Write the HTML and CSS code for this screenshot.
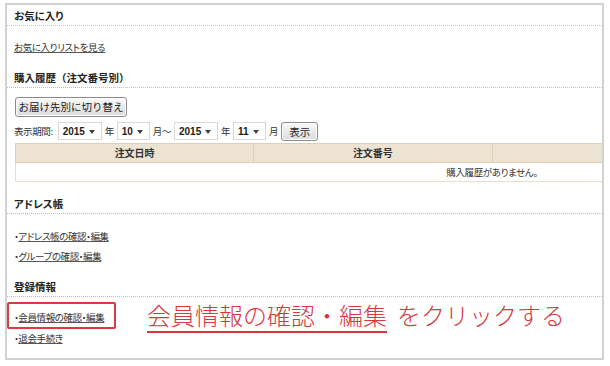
FILE: index.html
```html
<!DOCTYPE html>
<html lang="ja">
<head>
<meta charset="utf-8">
<title>マイページ</title>
<link rel="stylesheet" href="styles.css">
</head>
<body>
<div class="frame">
  <section class="sec sec-fav">
    <h2 class="sec-head">お気に入り</h2>
    <div class="sec-body">
      <a class="link" href="#">お気に入りリストを見る</a>
    </div>
  </section>

  <section class="sec sec-history">
    <h2 class="sec-head sec-head-wide">購入履歴（注文番号別）</h2>
    <div class="sec-body">
      <button class="btn btn-switch" type="button">お届け先別に切り替え</button>
      <div class="period">
        <span class="lbl lbl-period">表示期間:</span>
        <span class="sel sel-year"><select><option>2015</option></select></span>
        <span class="lbl">年</span>
        <span class="sel sel-month"><select><option>10</option></select></span>
        <span class="lbl">月～</span>
        <span class="sel sel-year"><select><option>2015</option></select></span>
        <span class="lbl">年</span>
        <span class="sel sel-month"><select><option>11</option></select></span>
        <span class="lbl">月</span>
        <button class="btn btn-show" type="button">表示</button>
      </div>
      <table class="orders">
        <thead>
          <tr><th>注文日時</th><th>注文番号</th><th></th><th></th></tr>
        </thead>
        <tbody>
          <tr><td colspan="4">購入履歴がありません。</td></tr>
        </tbody>
      </table>
    </div>
  </section>

  <section class="sec sec-address">
    <h2 class="sec-head">アドレス帳</h2>
    <ul class="sec-body links">
      <li>・<a class="link" href="#">アドレス帳の確認・編集</a></li>
      <li>・<a class="link" href="#">グループの確認・編集</a></li>
    </ul>
  </section>

  <section class="sec sec-member">
    <h2 class="sec-head">登録情報</h2>
    <ul class="sec-body links links-member">
      <li class="highlighted">・<a class="link" href="#">会員情報の確認・編集</a>
        <span class="hl-box"></span>
        <span class="callout"><span class="callout-target">会員情報の確認・編集</span><span class="callout-action">をクリックする</span></span>
      </li>
      <li>・<a class="link" href="#">退会手続き</a></li>
    </ul>
  </section>
</div>
</body>
</html>
```

FILE: styles.css
```css
html, body {
  margin: 0;
  padding: 0;
  background: #fff;
}

body {
  font-family: "Noto Sans CJK JP", "Noto Sans", sans-serif;
  font-size: 9.5px;
  letter-spacing: -0.4px;
  color: #333;
  font-feature-settings: "palt";
}

.frame {
  position: relative;
  margin: 3px 0 0 5px;
  width: 599px;
  height: 357px;
  box-sizing: border-box;
  border: 2px solid #d2d2d2;
  overflow: hidden;
}

.sec-head {
  margin: 15px 0 0;
  padding: 0 0 2px 7px;
  font-size: 10.5px;
  letter-spacing: 0;
  font-weight: bold;
  line-height: 14px;
  color: #222;
  border-bottom: 1px dotted #c8cc62;
}

.sec-head-wide {
  font-feature-settings: normal;
}

.sec-fav .sec-head {
  margin-top: 4px;
}

.sec-body {
  margin: 0;
  padding: 0 0 0 7px;
}

.link {
  color: #333;
  text-decoration: underline;
  text-decoration-color: #555;
}

/* favourites */
.sec-fav .sec-body {
  padding-top: 14px;
  line-height: 14px;
  padding-bottom: 2px;
}

/* purchase history */
.sec-history .sec-body {
  padding-top: 9px;
  padding-left: 8px;
}

.btn {
  display: block;
  box-sizing: border-box;
  height: 20px;
  padding: 0;
  margin: 0;
  font-family: inherit;
  font-size: 10.5px;
  letter-spacing: 0;
  line-height: 18px;
  color: #222;
  text-align: center;
  border: 1px solid #8a8a8a;
  border-radius: 3px;
  background: linear-gradient(#fafafa, #e9e9e9 50%, #dcdcdc);
  box-shadow: inset 0 0 0 1px #fff;
}

.btn-switch {
  width: 112px;
}

.period {
  display: flex;
  align-items: center;
  gap: 3px;
  margin-top: 5px;
  height: 18px;
  margin-left: -1px;
}

.lbl {
  font-size: 9.5px;
  line-height: 18px;
}

.lbl-period {
  margin-right: 2px;
}

.sel {
  position: relative;
  display: inline-block;
  height: 18px;
}

.sel::after {
  content: "";
  position: absolute;
  right: 7px;
  top: 8px;
  border-left: 3px solid transparent;
  border-right: 3px solid transparent;
  border-top: 4px solid #444;
  pointer-events: none;
}

.sel select {
  -webkit-appearance: none;
  appearance: none;
  display: block;
  box-sizing: border-box;
  height: 18px;
  margin: 0;
  padding: 0 0 0 4px;
  border: 1px solid #d8d8d8;
  border-radius: 0;
  background: #fff;
  font-family: "Liberation Sans", Arial, sans-serif;
  font-size: 10px;
  letter-spacing: 0;
  font-weight: bold;
  color: #222;
}

.sel-year select {
  width: 44px;
}

.sel-month select {
  width: 33px;
}

.btn-show {
  width: 37px;
  height: 19px;
}

.orders {
  margin-top: 3px;
  width: 954px;
  table-layout: fixed;
  border-collapse: collapse;
}

.orders th {
  height: 18px;
  padding: 0;
  line-height: 18px;
  font-size: 10px;
  letter-spacing: 0;
  font-weight: bold;
  color: #333;
  text-align: center;
  background: #ede3d3;
  border: 1px solid #e0cfb7;
}

.orders td {
  height: 18px;
  padding: 0;
  line-height: 18px;
  font-size: 9.5px;
  text-align: center;
  border: 1px solid #e9ddcc;
}

/* address book / member */
.links {
  list-style: none;
  padding-top: 12px;
  line-height: 20px;
}

.sec-address .sec-head {
  margin-top: 15px;
}

.sec-member .sec-head {
  margin-top: 14px;
}

.links-member {
  padding-top: 10px;
  line-height: 21px;
}

.links li {
  white-space: nowrap;
}

.highlighted {
  position: relative;
}

.hl-box {
  position: absolute;
  left: -7px;
  top: -5px;
  width: 109px;
  height: 27px;
  box-sizing: border-box;
  border: 2px solid #dc3a41;
  border-radius: 2px;
}

.callout {
  position: absolute;
  left: 133px;
  top: -4px;
  display: flex;
  align-items: flex-start;
  font-size: 24px;
  font-weight: 300;
  letter-spacing: 0;
  line-height: 24px;
  font-feature-settings: normal;
  color: #d9363e;
  white-space: nowrap;
}

.callout-target {
  padding-bottom: 4px;
  border-bottom: 2px solid #d9363e;
}

.callout-action {
  margin-left: 10px;
}
```
